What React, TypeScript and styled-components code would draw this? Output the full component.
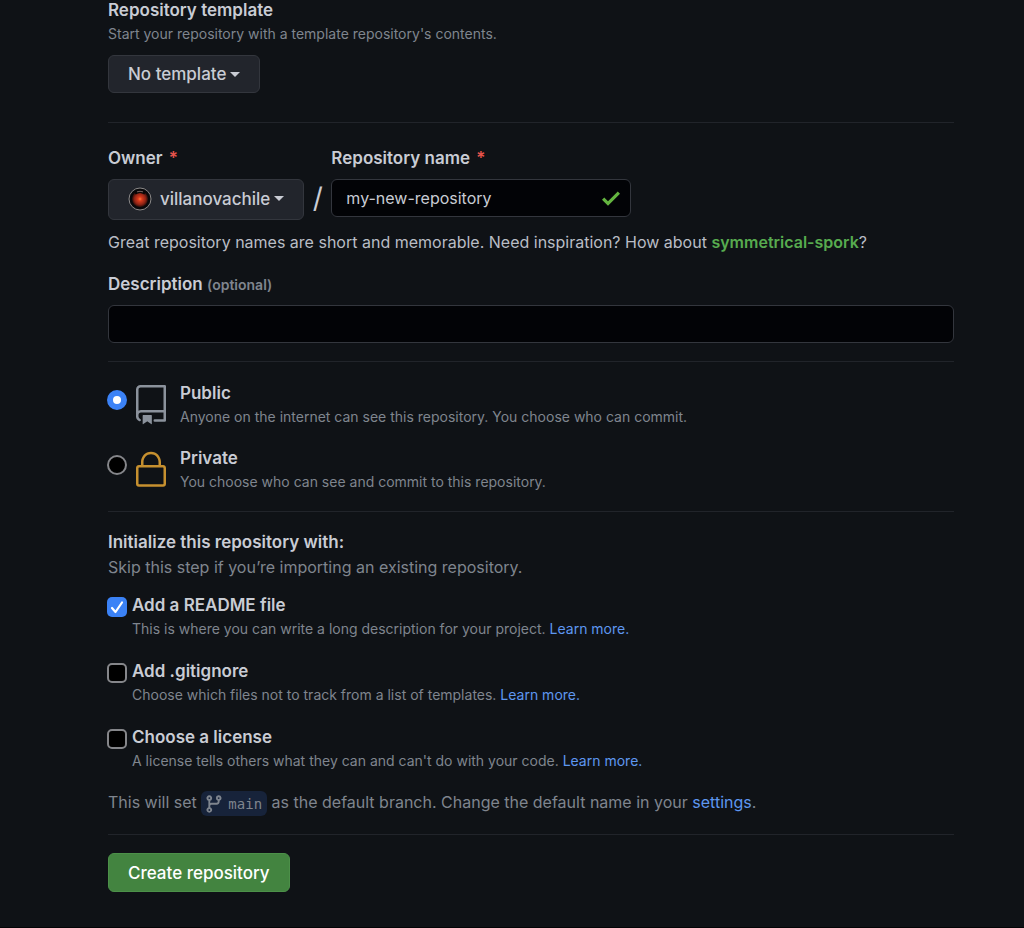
import React from "react";
import styled, { createGlobalStyle } from "styled-components";

const GlobalStyle = createGlobalStyle`
  *, *::before, *::after { box-sizing: border-box; }
  html { background: #000; }
  body {
    margin: 0;
    background: #0f1216;
    color: #c9ccd4;
    font-family: Inter, "Liberation Sans", sans-serif;
    font-size: 16px;
    line-height: 20px;
  }
  button, input { font: inherit; color: inherit; }
`;

const Form = styled.form`
  display: flex;
  flex-direction: column;
  align-items: flex-start;
  padding: 0 70px 35px 108px;
  border-bottom: 1px solid #030406;
`;

const Divider = styled.hr<{ $above: number; $below: number }>`
  align-self: stretch;
  height: 1px;
  border: 0;
  background: #21242a;
  margin: ${(p) => p.$above}px 0 ${(p) => p.$below}px;
`;

const Heading = styled.h2`
  margin: 0;
  font-size: 17px;
  line-height: 20px;
  font-weight: 600;
`;

const Label = styled.label`
  display: block;
  font-size: 17px;
  font-weight: 600;
`;

const Required = styled.span`
  color: #e5534b;
  margin-left: 2px;
`;

const Optional = styled.span`
  font-size: 14px;
  color: #7f858e;
`;

const Note = styled.p`
  margin: 4px 0 0;
  font-size: 14px;
  color: #7f858e;
`;

const Text = styled.p<{ $muted?: boolean; $above: number }>`
  margin: ${(p) => p.$above}px 0 0;
  color: ${(p) => (p.$muted ? "#7f858e" : "#b9bdc5")};
`;

const Link = styled.a`
  color: #5e97f0;
  text-decoration: none;
`;

const Suggestion = styled.strong`
  color: #57ab4f;
  font-weight: 600;
`;

const SelectButton = styled.button<{ $tall?: boolean }>`
  display: inline-flex;
  align-items: center;
  height: ${(p) => (p.$tall ? 41 : 38)}px;
  padding: 0 19px ${(p) => (p.$tall ? 2 : 0)}px;
  border: 1px solid #33363d;
  border-radius: 6px;
  background: #22252c;
  font-size: 17px;
  font-weight: 500;
  cursor: pointer;
`;

const Caret = styled.span`
  margin-left: 4px;
  border: 5px solid transparent;
  border-top-color: currentColor;
  border-bottom: 0;
`;

const TemplateRow = styled.div`
  margin-top: 11px;
`;

const FieldRow = styled.div`
  display: flex;
  align-items: flex-start;
`;

const Field = styled.div`
  display: flex;
  flex-direction: column;
  gap: 11px;
`;

const DescriptionField = styled.div`
  display: flex;
  flex-direction: column;
  align-self: stretch;
  gap: 10px;
  margin-top: 22px;
`;

const Slash = styled.span`
  width: 27px;
  margin-top: 31px;
  text-align: center;
  font-size: 28px;
  line-height: 38px;
`;

const InputWrap = styled.div`
  display: flex;
  align-items: center;
  width: 300px;
  padding-right: 10px;
  border: 1px solid #33363d;
  border-radius: 6px;
  background: #020306;
`;

const NameInput = styled.input`
  flex: 1;
  min-width: 0;
  height: 36px;
  padding: 0 14px;
  border: 0;
  outline: 0;
  background: transparent;
`;

const DescriptionInput = styled.input`
  width: 100%;
  height: 38px;
  padding: 0 14px;
  border: 1px solid #33363d;
  border-radius: 6px;
  background: #020306;
`;

const Choice = styled.div<{ $above: number }>`
  display: flex;
  align-items: flex-start;
  margin-top: ${(p) => p.$above}px;
`;

const Radio = styled.input`
  appearance: none;
  flex: none;
  width: 20px;
  height: 20px;
  margin: 7px 4px 0 -1px;
  border: 2px solid #85868a;
  border-radius: 50%;
  background: #000;
  &:checked {
    border: 6px solid #3b82f6;
    background: #fff;
  }
`;

const ChoiceIcon = styled.svg<{ $color: string }>`
  flex: none;
  width: 40px;
  height: 40px;
  margin: 2px 9px -4px 0;
  fill: ${(p) => p.$color};
`;

const CheckWrap = styled.span`
  display: grid;
  flex: none;
  margin: 2px 5px 0 -1px;
  > * { grid-area: 1 / 1; }
`;

const Checkbox = styled.input`
  appearance: none;
  width: 20px;
  height: 20px;
  margin: 0;
  border: 2px solid #85868a;
  border-radius: 5px;
  background: #000;
  &:checked {
    border: 0;
    background: #3b82f6;
  }
  & + svg { display: none; }
  &:checked + svg { display: block; }
`;

const Tick = styled.svg`
  width: 20px;
  height: 20px;
  pointer-events: none;
`;

const Branch = styled.code`
  display: inline-flex;
  align-items: center;
  gap: 4px;
  height: 25px;
  padding: 0 5px 0 3px;
  border-radius: 6px;
  background: #17233a;
  font-family: "DejaVu Sans Mono", monospace;
  font-size: 14px;
  vertical-align: middle;
`;

const BranchIcon = styled.svg`
  width: 20px;
  height: 20px;
  fill: currentColor;
`;

const Avatar = styled.svg`
  width: 24px;
  height: 24px;
  margin-right: 8px;
`;

const Submit = styled.button`
  height: 39px;
  padding: 0 19px;
  border: 1px solid #4c9049;
  border-radius: 6px;
  background: #438440;
  color: #fff;
  font-size: 17px;
  font-weight: 500;
  cursor: pointer;
`;

const RepoPath = () => (
  <>
    <path fillRule="evenodd" d="M3 2.75A2.75 2.75 0 015.75 0h14.5a.75.75 0 01.75.75v20.5a.75.75 0 01-.75.75h-6a.75.75 0 010-1.5h5.25v-4H6A1.5 1.5 0 004.5 18v.75c0 .716.43 1.334 1.05 1.605a.75.75 0 01-.6 1.374A3.25 3.25 0 013 18.75v-16zM19.5 1.5V15H6c-.546 0-1.059.146-1.5.401V2.75c0-.69.56-1.25 1.25-1.25H19.5z" />
    <path d="M7 18.25a.25.25 0 01.25-.25h5a.25.25 0 01.25.25v5.01a.25.25 0 01-.397.201l-2.206-1.604a.25.25 0 00-.294 0L7.397 23.46a.25.25 0 01-.397-.2v-5.01z" />
  </>
);

const LockPath = () => (
  <path fillRule="evenodd" d="M6 9V7.25C6 3.845 8.503 1 12 1s6 2.845 6 6.25V9h1.25c.966 0 1.75.784 1.75 1.75v9.5A1.75 1.75 0 0119.25 22H4.75A1.75 1.75 0 013 20.25v-9.5C3 9.784 3.784 9 4.75 9H6zm1.5-1.75C7.5 4.58 9.422 2.5 12 2.5s4.5 2.08 4.5 4.75V9h-9V7.25zm-3 3.5a.25.25 0 01.25-.25h14.5a.25.25 0 01.25.25v9.5a.25.25 0 01-.25.25H4.75a.25.25 0 01-.25-.25v-9.5z" />
);

const visibilities = [
  { id: "public", title: "Public", note: "Anyone on the internet can see this repository. You choose who can commit.", color: "#8b929c", icon: <RepoPath /> },
  { id: "private", title: "Private", note: "You choose who can see and commit to this repository.", color: "#c6902f", icon: <LockPath /> },
];

const extras = [
  { id: "readme", title: "Add a README file", note: "This is where you can write a long description for your project.", checked: true },
  { id: "gitignore", title: "Add .gitignore", note: "Choose which files not to track from a list of templates.", checked: false },
  { id: "license", title: "Choose a license", note: "A license tells others what they can and can't do with your code.", checked: false },
];

export default function App() {
  return (
    <>
      <GlobalStyle />
      <Form onSubmit={(e) => e.preventDefault()}>
        <Heading>Repository template</Heading>
        <Note>Start your repository with a template repository's contents.</Note>
        <TemplateRow>
          <SelectButton type="button">
            No template
            <Caret />
          </SelectButton>
        </TemplateRow>

        <Divider $above={29} $below={25} />

        <FieldRow>
          <Field>
            <Label htmlFor="owner">
              Owner <Required>*</Required>
            </Label>
            <SelectButton id="owner" type="button" $tall>
              <Avatar viewBox="0 0 24 24" aria-hidden="true">
                <defs>
                  <radialGradient id="lens">
                    <stop offset="0" stopColor="#ff7a3c" />
                    <stop offset="0.25" stopColor="#d93a1c" />
                    <stop offset="0.7" stopColor="#8f2415" />
                    <stop offset="1" stopColor="#2a0d0a" />
                  </radialGradient>
                </defs>
                <circle cx="12" cy="12" r="11" fill="#08080a" stroke="#8c8a8a" strokeWidth="1" />
                <circle cx="12" cy="12" r="8" fill="url(#lens)" />
                <path d="M7 6.500Q12 3 17 6.500" fill="none" stroke="#0a0808" strokeWidth="2.500" />
                <path d="M9 4.800Q12 3.800 15 4.800" fill="none" stroke="#8b7774" strokeWidth="0.800" />
              </Avatar>
              villanovachile
              <Caret />
            </SelectButton>
          </Field>
          <Slash>/</Slash>
          <Field>
            <Label htmlFor="name">
              Repository name <Required>*</Required>
            </Label>
            <InputWrap>
              <NameInput id="name" defaultValue="my-new-repository" />
              <svg width="18" height="15" viewBox="0 3.5 12 9.500" fill="#64b540" aria-hidden="true">
                <path d="M12 5l-8 8-4-4 1.500-1.500L4 10l6.500-6.500L12 5z" />
              </svg>
            </InputWrap>
          </Field>
        </FieldRow>
        <Text $above={12}>
          Great repository names are short and memorable. Need inspiration? How about{" "}
          <Suggestion>symmetrical-spork</Suggestion>?
        </Text>

        <DescriptionField>
          <Label htmlFor="description">
            Description <Optional>(optional)</Optional>
          </Label>
          <DescriptionInput id="description" />
        </DescriptionField>

        <Divider $above={18} $below={21} />

        {visibilities.map((v, i) => (
          <Choice key={v.id} $above={i ? 21 : 0}>
            <Radio type="radio" name="visibility" id={v.id} defaultChecked={i === 0} />
            <ChoiceIcon viewBox="0 0 24 24" $color={v.color} aria-hidden="true">
              {v.icon}
            </ChoiceIcon>
            <div>
              <Label htmlFor={v.id}>{v.title}</Label>
              <Note>{v.note}</Note>
            </div>
          </Choice>
        ))}

        <Divider $above={19} $below={20} />

        <Heading>Initialize this repository with:</Heading>
        <Text $muted $above={5}>
          Skip this step if you’re importing an existing repository.
        </Text>
        {extras.map((x, i) => (
          <Choice key={x.id} $above={i ? 22 : 18}>
            <CheckWrap>
              <Checkbox type="checkbox" id={x.id} defaultChecked={x.checked} />
              <Tick viewBox="0 0 20 20" aria-hidden="true">
                <path d="M5 11L8.500 15L15 5.500" fill="none" stroke="#fff" strokeWidth="2.200" strokeLinecap="round" strokeLinejoin="round" />
              </Tick>
            </CheckWrap>
            <div>
              <Label htmlFor={x.id}>{x.title}</Label>
              <Note>
                {x.note} <Link href="#">Learn more.</Link>
              </Note>
            </div>
          </Choice>
        ))}

        <Text $muted $above={20}>
          This will set{" "}
          <Branch>
            <BranchIcon viewBox="0 0 16 16" aria-hidden="true">
              <path fillRule="evenodd" d="M11.75 2.5a.75.75 0 100 1.5.75.75 0 000-1.5zm-2.25.75a2.25 2.25 0 113 2.122V6A2.5 2.5 0 0110 8.5H6a1 1 0 00-1 1v1.128a2.251 2.251 0 11-1.5 0V5.372a2.25 2.25 0 111.5 0v1.836A2.492 2.492 0 016 7h4a1 1 0 001-1v-.628A2.25 2.25 0 019.5 3.25zM4.25 12a.75.75 0 100 1.5.75.75 0 000-1.5zM3.5 3.25a.75.75 0 111.5 0 .75.75 0 01-1.5 0z" />
            </BranchIcon>
            main
          </Branch>{" "}
          as the default branch. Change the default name in your <Link href="#">settings</Link>.
        </Text>

        <Divider $above={18} $below={18} />

        <Submit type="submit">Create repository</Submit>
      </Form>
    </>
  );
}
